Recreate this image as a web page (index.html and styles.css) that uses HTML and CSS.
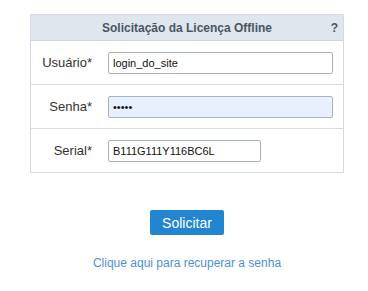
FILE: index.html
```html
<!DOCTYPE html>
<html lang="pt-BR">
<head>
    <meta charset="UTF-8">
    <meta name="viewport" content="width=device-width, initial-scale=1.0">
    <title>Solicitação da Licença Offline</title>
    <link rel="stylesheet" href="styles.css">
</head>
<body>
    <div class="page">
        <form class="license-form">
            <div class="form-head">
                <span class="form-title">Solicitação da Licença Offline</span>
                <span class="help">?</span>
            </div>
            <div class="form-row">
                <label class="form-label" for="user">Usuário*</label>
                <input type="text" id="user" class="input-field" value="login_do_site">
            </div>
            <div class="form-row">
                <label class="form-label" for="pass">Senha*</label>
                <input type="password" id="pass" class="input-field filled" value="senha">
            </div>
            <div class="form-row">
                <label class="form-label" for="serial">Serial*</label>
                <input type="text" id="serial" class="input-field short" value="B111G111Y116BC6L">
            </div>
        </form>

        <div class="actions">
            <button type="button" class="btn">Solicitar</button>
            <a href="#" class="recover">Clique aqui para recuperar a senha</a>
        </div>
    </div>
</body>
</html>
```

FILE: styles.css
```css
body {
    margin: 0;
    padding: 0;
    background-color: #fff;
    font-family: Arial, "Liberation Sans", sans-serif;
    font-size: 13px;
    color: #333;
}
.page {
    padding-top: 14px;
    width: 314px;
    margin-left: 30px;
}
.license-form {
    border: 1px solid #d3dae1;
}
.form-head {
    display: flex;
    align-items: center;
    justify-content: center;
    position: relative;
    height: 25px;
    background-color: #dfe6ee;
    border-bottom: 1px solid #cdd5dd;
}
.form-title {
    font-weight: bold;
    font-size: 12px;
    color: #4a5563;
}
.help {
    position: absolute;
    right: 5px;
    top: 6px;
    font-weight: bold;
    font-size: 12px;
    color: #4a5563;
}
.form-row {
    display: flex;
    align-items: center;
    height: 43px;
    border-bottom: 1px solid #d3dae1;
}
.form-row:last-child {
    border-bottom: none;
}
.form-label {
    width: 61px;
    text-align: right;
    margin-right: 16px;
    color: #333;
}
.input-field {
    box-sizing: border-box;
    width: 225px;
    height: 22px;
    padding: 0 4px;
    border: 1px solid #a9b3bd;
    border-radius: 2px;
    font-family: Arial, "Liberation Sans", sans-serif;
    font-size: 11px;
    color: #111;
    background-color: #fff;
    outline: none;
}
.input-field.filled {
    background-color: #e8f0fe;
}
.input-field.short {
    width: 153px;
}
.actions {
    display: flex;
    flex-direction: column;
    align-items: center;
    padding-top: 37px;
}
.btn {
    width: 74px;
    height: 25px;
    border: none;
    border-radius: 2px;
    background-color: #2185d0;
    color: #fff;
    font-family: Arial, "Liberation Sans", sans-serif;
    font-size: 14px;
    padding: 0;
    cursor: pointer;
}
.recover {
    margin-top: 21px;
    color: #4a90d9;
    font-size: 12px;
    text-decoration: none;
}
```
